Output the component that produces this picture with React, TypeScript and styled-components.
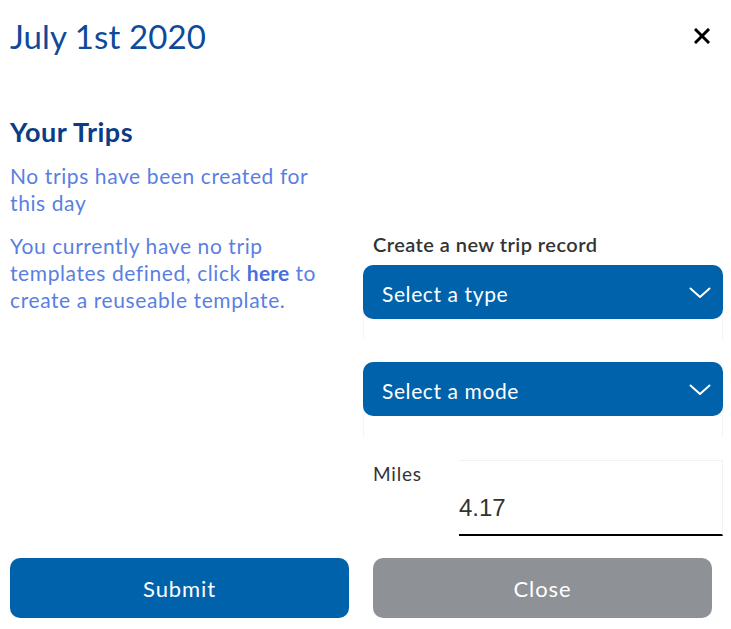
import React from "react";
import styled, { createGlobalStyle } from "styled-components";

const Global = createGlobalStyle`
  html, body { margin: 0; padding: 0; background: #fff; }
  body { font-family: "Source Sans Pro", Lato, "Noto Sans", sans-serif; }
  * { box-sizing: border-box; }
`;

const Page = styled.div`
  width: 731px;
  padding: 0 8px 0 10px;
`;

const Header = styled.header`
  display: flex;
  align-items: center;
  justify-content: space-between;
  height: 72px;
  padding-right: 12px;
`;

const Title = styled.h1`
  margin: 0;
  font-size: 33px;
  font-weight: 400;
  color: #0d4a9a;
  letter-spacing: 0.1px;
`;

const CloseX = styled.button`
  border: 0;
  background: none;
  padding: 0;
  width: 18px;
  height: 18px;
  display: flex;
  align-items: center;
  justify-content: center;
  cursor: pointer;
`;

const Main = styled.div`
  display: grid;
  grid-template-columns: 339px 360px;
  column-gap: 14px;
`;

const Left = styled.section`
  padding-top: 44px;
`;

const Heading = styled.h2`
  margin: 0 0 14px;
  font-size: 27px;
  font-weight: 700;
  line-height: 32px;
  color: #0a3d86;
  letter-spacing: 0.5px;
`;

const Para = styled.p`
  margin: 0 0 16px;
  max-width: 330px;
  font-size: 21px;
  line-height: 27px;
  letter-spacing: 0.6px;
  color: #5a7fe2;
`;

const Strong = styled.a`
  font-weight: 700;
  color: #4a6fdc;
  letter-spacing: 0.2px;
  text-decoration: none;
`;

const Right = styled.section`
  padding-top: 160px;
  display: flex;
  flex-direction: column;
`;

const Label = styled.div`
  padding-left: 10px;
  font-size: 20px;
  font-weight: 600;
  line-height: 24px;
  letter-spacing: 0.45px;
  color: #333;
  margin-bottom: 9px;
`;

const SelectWrap = styled.div`
  height: 75px;
  border: 1px solid #f5f5f5;
  border-bottom: 0;
  border-radius: 10px 10px 0 0;
  margin-bottom: 22px;
`;

const SelectBox = styled.div`
  height: 54px;
  margin: -1px;
  border-radius: 10px;
  background: #0062aa;
  color: #fff;
  display: flex;
  align-items: center;
  justify-content: space-between;
  padding: 2px 12px 0 19px;
  font-size: 21px;
  letter-spacing: 0.6px;
`;

const MilesRow = styled.div`
  display: grid;
  grid-template-columns: 96px 1fr;
  margin-top: 1px;
`;

const MilesLabel = styled.label`
  padding: 2px 0 0 10px;
  font-size: 19px;
  letter-spacing: 0.8px;
  color: #333;
  line-height: 24px;
`;

const Input = styled.input`
  height: 76px;
  width: 100%;
  border: 1px solid #f2f2f2;
  border-bottom: 2px solid #000;
  border-left: 0;
  padding: 20px 0 0 0;
  font-family: "Liberation Sans", Arial, sans-serif;
  font-size: 24px;
  color: #333;
  outline: none;
  background: #fff;
`;

const Buttons = styled.div`
  display: grid;
  grid-template-columns: 339px 339px;
  column-gap: 24px;
  margin-top: 22px;
`;

const Btn = styled.button<{ $tone: "primary" | "muted" }>`
  height: 60px;
  border: 0;
  border-radius: 10px;
  background: ${(p) => (p.$tone === "primary" ? "#0062aa" : "#8e9195")};
  color: #fff;
  font-family: "Source Sans Pro", Lato, "Noto Sans", sans-serif;
  font-size: 22px;
  letter-spacing: 0.9px;
  padding-top: 2px;
  cursor: pointer;
`;

const Chevron = () => (
  <svg width="22" height="12" viewBox="0 0 22 12" fill="none">
    <path d="M1.5 1.5 L11 10 L20.5 1.5" stroke="#fff" strokeWidth="2" strokeLinecap="round" strokeLinejoin="round" />
  </svg>
);

export default function App() {
  return (
    <Page>
      <Global />
      <Header>
        <Title>July 1st 2020</Title>
        <CloseX aria-label="close">
          <svg width="16" height="16" viewBox="0 0 16 16">
            <path d="M2 2 L14 14 M14 2 L2 14" stroke="#000" strokeWidth="3" strokeLinecap="square" />
          </svg>
        </CloseX>
      </Header>
      <Main>
        <Left>
          <Heading>Your Trips</Heading>
          <Para>No trips have been created for this day</Para>
          <Para>
            You currently have no trip templates defined, click <Strong>here</Strong> to create a reuseable template.
          </Para>
        </Left>
        <Right>
          <Label>Create a new trip record</Label>
          <SelectWrap>
            <SelectBox>
              <span>Select a type</span>
              <Chevron />
            </SelectBox>
          </SelectWrap>
          <SelectWrap>
            <SelectBox>
              <span>Select a mode</span>
              <Chevron />
            </SelectBox>
          </SelectWrap>
          <MilesRow>
            <MilesLabel>Miles</MilesLabel>
            <Input defaultValue="4.17" />
          </MilesRow>
        </Right>
      </Main>
      <Buttons>
        <Btn $tone="primary">Submit</Btn>
        <Btn $tone="muted">Close</Btn>
      </Buttons>
    </Page>
  );
}
